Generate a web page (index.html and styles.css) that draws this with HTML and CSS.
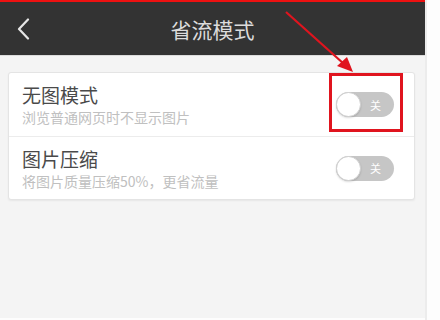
FILE: index.html
```html
<!DOCTYPE html>
<html lang="zh-CN">
<head>
<meta charset="utf-8">
<link rel="stylesheet" href="styles.css">
</head>
<body>
<div class="screen">
  <div class="app">
    <div class="topline"></div>
    <header class="header">
      <svg class="back" width="14" height="22" viewBox="0 0 14 22"><path d="M12 1.5 L3 11 L12 20.5" fill="none" stroke="#e6e6e6" stroke-width="2.2" stroke-linecap="round" stroke-linejoin="round"/></svg>
      <div class="title">省流模式</div>
    </header>
    <main class="content">
      <div class="card">
        <div class="row">
          <div class="texts">
            <div class="name">无图模式</div>
            <div class="desc">浏览普通网页时不显示图片</div>
          </div>
          <div class="toggle"><span class="knob"></span><span class="label">关</span></div>
        </div>
        <div class="row">
          <div class="texts">
            <div class="name">图片压缩</div>
            <div class="desc">将图片质量压缩50%，更省流量</div>
          </div>
          <div class="toggle"><span class="knob"></span><span class="label">关</span></div>
        </div>
      </div>
    </main>
  </div>
  <div class="edge"></div>
  <div class="redbox"></div>
  <svg class="arrow" width="440" height="320" viewBox="0 0 440 320">
    <line x1="286" y1="12" x2="344" y2="64" stroke="#e0141e" stroke-width="2.2"/>
    <polygon points="353,72 337,66 347,57" fill="#e0141e"/>
  </svg>
</div>
</body>
</html>
```
FILE: styles.css
```css
* { box-sizing: border-box; }
html, body { margin: 0; padding: 0; }
body {
  width: 440px;
  height: 320px;
  overflow: hidden;
  font-family: "Noto Sans CJK SC", "Noto Sans", sans-serif;
  background: #fdfdfd;
}
.screen {
  position: relative;
  display: flex;
  width: 440px;
  height: 320px;
}
.app {
  width: 425px;
  height: 318px;
  display: flex;
  flex-direction: column;
  background: #f4f4f4;
}
.topline {
  height: 2px;
  background: #ee1111;
}
.header {
  height: 54px;
  background: #333333;
  display: flex;
  align-items: center;
  position: relative;
  border-bottom: 1px solid #dcdcdc;
}
.back {
  margin-left: 16px;
}
.title {
  position: absolute;
  left: 0;
  right: 0;
  text-align: center;
  color: #dcdcdc;
  font-size: 21px;
  line-height: 26px;
}
.content {
  padding: 16px 10px 0 8px;
}
.card {
  background: #fff;
  border: 1px solid #e4e4e4;
  border-radius: 3px;
  box-shadow: 0 1px 2px rgba(0,0,0,0.06);
}
.row {
  display: flex;
  align-items: center;
  justify-content: space-between;
  height: 63px;
  padding: 0 20px 0 13px;
}
.row + .row {
  border-top: 1px solid #ececec;
}
.texts {
  display: flex;
  flex-direction: column;
  gap: 3px;
}
.name {
  font-size: 19px;
  line-height: 22px;
  color: #4a4a4a;
}
.desc {
  font-size: 14px;
  line-height: 16px;
  color: #c0c0c0;
}
.toggle {
  width: 58px;
  height: 25px;
  border-radius: 13px;
  background: #c6c6c6;
  display: flex;
  align-items: center;
  position: relative;
}
.knob {
  width: 25px;
  height: 25px;
  border-radius: 50%;
  background: #fff;
  border: 1px solid #d0d0d0;
  box-shadow: 0 1px 2px rgba(0,0,0,0.15);
}
.label {
  margin-left: 9px;
  font-size: 11px;
  color: #fff;
}
.edge {
  width: 15px;
  height: 320px;
  border-left: 2px solid #ececec;
  background: #fdfdfd;
}
.redbox {
  position: absolute;
  left: 329px;
  top: 73px;
  width: 74px;
  height: 59px;
  border: 3px solid #e0141e;
}
.arrow {
  position: absolute;
  left: 0;
  top: 0;
}
```
